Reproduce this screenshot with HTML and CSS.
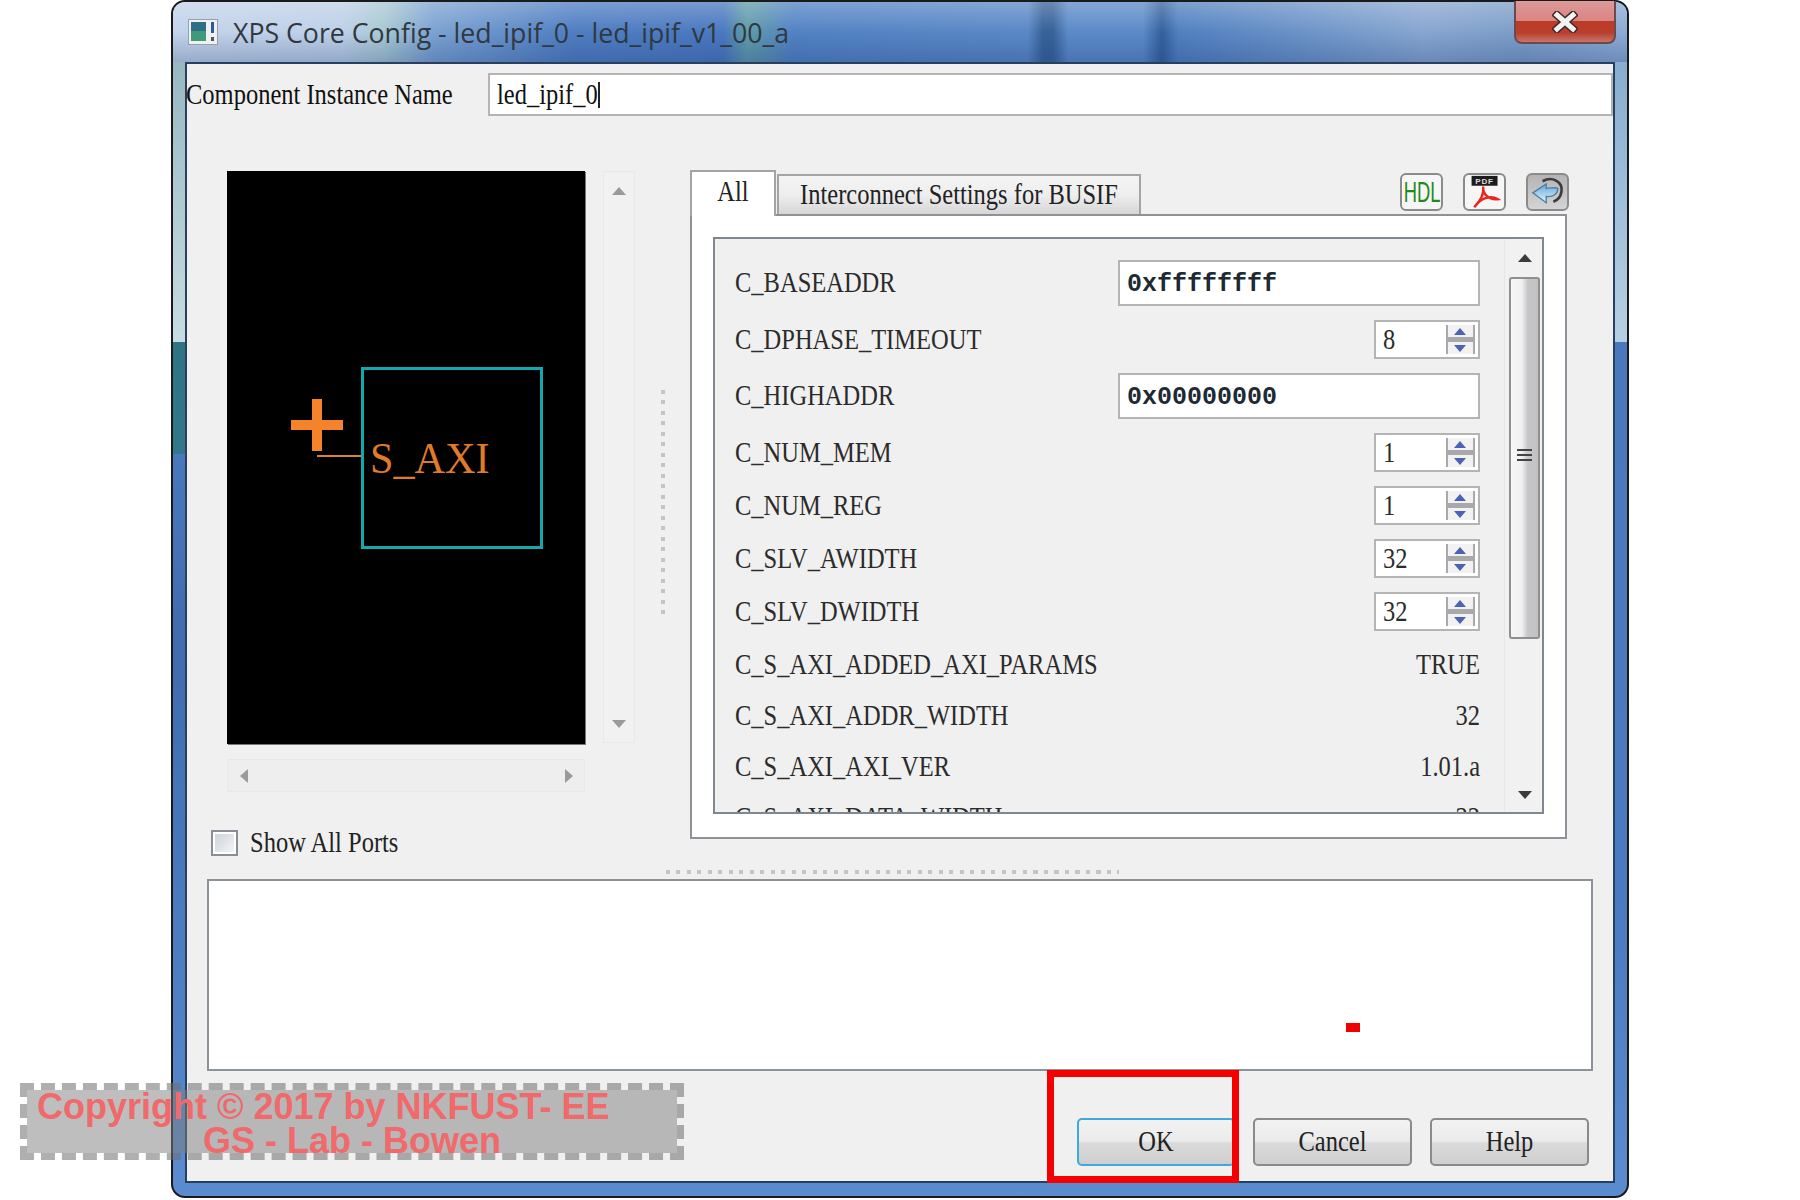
FILE: index.html
```html
<!DOCTYPE html>
<html lang="en">
<head>
    <meta charset="UTF-8">
    <title>XPS Core Config</title>
    <link rel="stylesheet" href="styles.css">
</head>
<body>
    <div class="window">
        <div class="titlebar">
            <svg class="app-icon" viewBox="0 0 30 26" width="30" height="26">
                <rect x="0.5" y="0.5" width="29" height="25" fill="#eef0f2" stroke="#9aa0a8"/>
                <rect x="3" y="3" width="15" height="19" fill="#2c6f86"/>
                <rect x="3" y="12" width="15" height="10" fill="#3f9a7a"/>
                <rect x="23" y="3" width="3" height="11" fill="#2c5a9a"/>
                <rect x="23" y="18" width="3" height="4" fill="#555"/>
            </svg>
            <span class="title-text">XPS Core Config - led_ipif_0 - led_ipif_v1_00_a</span>
            <div class="close-btn">
                <svg viewBox="0 0 26 22" width="26" height="22">
                    <path d="M5 4 L21 18 M21 4 L5 18" stroke="#3b2a2a" stroke-width="8" stroke-linecap="square"/>
                    <path d="M5 4 L21 18 M21 4 L5 18" stroke="#f4f1f1" stroke-width="5" stroke-linecap="square"/>
                </svg>
            </div>
        </div>

        <div class="client">
            <div class="name-row">
                <label class="name-label"><span class="tall">Component Instance Name</span></label>
                <div class="name-input"><span class="tall">led_ipif_0</span><i class="caret"></i></div>
            </div>

            <div class="main">
                <div class="diagram-col">
                    <div class="diagram-row">
                        <div class="canvas">
                            <div class="plus"></div>
                            <div class="wire"></div>
                            <div class="ip-box"><span class="ip-name">S_AXI</span></div>
                        </div>
                        <div class="vscroll">
                            <i class="arrow up grey"></i>
                            <i class="arrow down grey"></i>
                        </div>
                    </div>
                    <div class="hscroll">
                        <i class="arrow left grey"></i>
                        <i class="arrow right grey"></i>
                    </div>
                    <div class="show-ports">
                        <span class="checkbox"></span>
                        <span class="tall">Show All Ports</span>
                    </div>
                </div>

                <div class="vsplit"></div>

                <div class="settings">
                    <div class="tab-head">
                        <div class="tab active"><span class="tall">All</span></div>
                        <div class="tab"><span class="tall">Interconnect Settings for BUSIF</span></div>
                        <div class="tools">
                            <div class="tool hdl"><span class="hdl-text">HDL</span></div>
                            <div class="tool">
                                <svg viewBox="0 0 40 38" width="38" height="34">
                                    <rect x="5" y="1" width="29" height="11" fill="#1c1c1c"/>
                                    <text x="19.5" y="10" class="pdf-text">PDF</text>
                                    <path d="M8 36 C14 30 19 21 18 13 C17 21 24 28 34 27 C26 22 15 26 8 36 Z" fill="none" stroke="#e8281e" stroke-width="2.8"/>
                                </svg>
                            </div>
                            <div class="tool back">
                                <svg viewBox="0 0 40 38" width="38" height="34">
                                    <path d="M14 7 C24 1 37 7 35 19 C34 25 31 28 26 30" fill="none" stroke="#3c3c3c" stroke-width="3"/>
                                    <path d="M3 20 L18 10 L18 15 C24 15 28 13 31 15 C31 21 26 25 18 24 L18 31 Z" fill="url(#backFill)" stroke="#4d7ea8" stroke-width="1.5"/>
                                    <defs>
                                        <linearGradient id="backFill" x1="0" y1="0" x2="0" y2="1">
                                            <stop offset="0" stop-color="#5fa8dc"/>
                                            <stop offset="1" stop-color="#e6f4fb"/>
                                        </linearGradient>
                                    </defs>
                                </svg>
                            </div>
                        </div>
                    </div>
                    <div class="pane">
                        <div class="params">
                            <div class="rows">
                                <div class="row">
                                    <span class="tall">C_BASEADDR</span>
                                    <div class="field">0xffffffff</div>
                                </div>
                                <div class="row">
                                    <span class="tall">C_DPHASE_TIMEOUT</span>
                                    <div class="spin"><span class="tall">8</span><div class="spin-btns"><i class="spin-up"></i><i class="spin-down"></i></div></div>
                                </div>
                                <div class="row">
                                    <span class="tall">C_HIGHADDR</span>
                                    <div class="field">0x00000000</div>
                                </div>
                                <div class="row">
                                    <span class="tall">C_NUM_MEM</span>
                                    <div class="spin"><span class="tall">1</span><div class="spin-btns"><i class="spin-up"></i><i class="spin-down"></i></div></div>
                                </div>
                                <div class="row">
                                    <span class="tall">C_NUM_REG</span>
                                    <div class="spin"><span class="tall">1</span><div class="spin-btns"><i class="spin-up"></i><i class="spin-down"></i></div></div>
                                </div>
                                <div class="row">
                                    <span class="tall">C_SLV_AWIDTH</span>
                                    <div class="spin"><span class="tall">32</span><div class="spin-btns"><i class="spin-up"></i><i class="spin-down"></i></div></div>
                                </div>
                                <div class="row">
                                    <span class="tall">C_SLV_DWIDTH</span>
                                    <div class="spin"><span class="tall">32</span><div class="spin-btns"><i class="spin-up"></i><i class="spin-down"></i></div></div>
                                </div>
                                <div class="row plain">
                                    <span class="tall">C_S_AXI_ADDED_AXI_PARAMS</span>
                                    <span class="tall">TRUE</span>
                                </div>
                                <div class="row plain">
                                    <span class="tall">C_S_AXI_ADDR_WIDTH</span>
                                    <span class="tall">32</span>
                                </div>
                                <div class="row plain">
                                    <span class="tall">C_S_AXI_AXI_VER</span>
                                    <span class="tall">1.01.a</span>
                                </div>
                                <div class="row plain">
                                    <span class="tall">C_S_AXI_DATA_WIDTH</span>
                                    <span class="tall">32</span>
                                </div>
                            </div>
                            <div class="rows-scroll">
                                <i class="arrow up dark"></i>
                                <div class="thumb"><div class="grip"></div></div>
                                <i class="arrow down dark"></i>
                            </div>
                        </div>
                    </div>
                </div>
            </div>

            <div class="hsplit"></div>
            <div class="message"></div>

            <div class="buttons">
                <button class="btn default"><span class="tall">OK</span></button>
                <button class="btn"><span class="tall">Cancel</span></button>
                <button class="btn"><span class="tall">Help</span></button>
            </div>
        </div>

        <div class="red-box"></div>
        <div class="red-dot"></div>
    </div>

    <div class="watermark">
        <div>Copyright © 2017 by NKFUST- EE</div>
        <div class="wm-second">GS - Lab - Bowen</div>
    </div>
</body>
</html>
```

FILE: styles.css
```css
body {
    margin: 0;
    background: #fff;
    font-family: "Liberation Serif", serif;
    font-size: 24.5px;
    color: #2b2b2b;
}

.tall {
    display: inline-block;
    transform: scaleY(1.18);
}

.window {
    position: relative;
    box-sizing: border-box;
    width: 1458px;
    height: 1198px;
    margin-left: 171px;
    padding: 0 12px;
    border: 2px solid #1a1a1a;
    border-radius: 14px;
    background:
        linear-gradient(to bottom, #8db0ba 0, #c8dce2 340px, #2f7485 340px, #33788a 452px, #4a78bd 452px, #3f6dae 640px, #4a7abf 900px, #5b8ccf 100%) left / 50% 100% no-repeat,
        linear-gradient(to bottom, #7ea6cc 0, #b7cfe2 340px, #4a78bd 340px, #4a7abf 900px, #5b8ccf 100%) right / 50% 100% no-repeat;
}

.titlebar {
    display: flex;
    align-items: center;
    height: 60px;
    margin: 0 -12px;
    padding: 0 11px 0 15px;
    border-radius: 12px 12px 0 0;
    background:
        linear-gradient(to bottom, rgba(255, 255, 255, 0.25), rgba(255, 255, 255, 0) 50%, rgba(20, 50, 110, 0.25)),
        linear-gradient(to right, #c3d3ea 0, #bdd0e8 170px, #a8c8d2 211px, #7ba2d2 260px, #4f7ec2 400px, #4a78c0 550px, #5f9ca8 574px, #5282c4 620px, #5a88c6 855px, #37629a 870px, #37629a 880px, #5b8ac8 895px, #5b8ac8 970px, #33609c 989px, #5080c0 1005px, #87a6d0 1250px, #7d9dc8 1350px, #8dabd4 100%);
}

.app-icon {
    flex: none;
}

.title-text {
    flex: 1;
    margin-left: 15px;
    font-family: "Open Sans", sans-serif;
    font-size: 26.7px;
    color: #303840;
}

.close-btn {
    display: flex;
    align-items: center;
    justify-content: center;
    width: 98px;
    height: 41px;
    margin-top: -19px;
    border: 2px solid #6d4a4a;
    border-top: none;
    border-radius: 0 0 8px 8px;
    background: linear-gradient(to bottom, #dc9a98 0, #d98583 48%, #bf3a26 50%, #b8402e 78%, #c9746c 100%);
}

.client {
    box-sizing: border-box;
    height: 1121px;
    border: 2px solid #27405f;
    background: #f0f0f0;
}

.name-row {
    display: flex;
    align-items: center;
    margin-top: 9px;
}

.name-label {
    width: 302px;
    margin-left: -1px;
    color: #111;
}

.name-input {
    box-sizing: border-box;
    display: flex;
    align-items: center;
    width: 1125px;
    height: 43px;
    padding-left: 7px;
    border: 2px solid #b4b4b4;
    background: #fff;
    color: #111;
}

.caret {
    width: 2px;
    height: 26px;
    background: #222;
}

/* preview on the left, tabbed parameters on the right */
.main {
    display: flex;
    align-items: flex-start;
    margin-top: 55px;
    margin-left: 40px;
}

.diagram-row {
    display: flex;
    align-items: flex-start;
}

.canvas {
    position: relative;
    width: 358px;
    height: 573px;
    background: #000;
    box-shadow: 1px 1px 0 #777;
}

.plus {
    position: absolute;
    left: 64px;
    top: 228px;
    width: 52px;
    height: 52px;
    background:
        linear-gradient(#f5832b, #f5832b) center / 52px 10px no-repeat,
        linear-gradient(#f5832b, #f5832b) center / 10px 52px no-repeat;
}

.wire {
    position: absolute;
    left: 90px;
    top: 284px;
    width: 45px;
    height: 2px;
    background: #d9832f;
}

.ip-box {
    position: absolute;
    left: 134px;
    top: 196px;
    box-sizing: border-box;
    width: 182px;
    height: 182px;
    border: 3px solid #14a8ac;
}

.ip-name {
    position: absolute;
    left: 6px;
    top: 63px;
    font-size: 44px;
    color: #e07c28;
    transform: scaleX(0.96);
    transform-origin: left;
}

.vscroll {
    display: flex;
    flex-direction: column;
    align-items: center;
    justify-content: space-between;
    box-sizing: border-box;
    width: 32px;
    height: 572px;
    margin-left: 18px;
    padding: 15px 0 14px;
    border: 1px solid #e9e9e9;
    background: #f1f1f1;
}

.hscroll {
    display: flex;
    align-items: center;
    justify-content: space-between;
    box-sizing: border-box;
    width: 358px;
    height: 33px;
    margin-top: 15px;
    padding: 0 11px 0 12px;
    border: 1px solid #e9e9e9;
    background: #eeeeee;
}

.arrow {
    display: block;
    width: 0;
    height: 0;
}

.arrow.up {
    border: 7px solid transparent;
    border-top: none;
    border-bottom: 8px solid var(--tri);
}

.arrow.down {
    border: 7px solid transparent;
    border-bottom: none;
    border-top: 8px solid var(--tri);
}

.arrow.left {
    border: 7px solid transparent;
    border-left: none;
    border-right: 8px solid var(--tri);
}

.arrow.right {
    border: 7px solid transparent;
    border-right: none;
    border-left: 8px solid var(--tri);
}

.arrow.grey {
    --tri: #9a9a9a;
}

.arrow.dark {
    --tri: #3b3b3b;
}

.show-ports {
    display: flex;
    align-items: center;
    gap: 12px;
    margin-top: 37px;
    margin-left: -16px;
    color: #222;
}

.checkbox {
    box-sizing: border-box;
    width: 27px;
    height: 26px;
    border: 2px solid #8a8f96;
    background: linear-gradient(135deg, #c9d0da, #f6f7f9);
    box-shadow: inset 0 0 0 2px #fff;
}

.vsplit {
    width: 4px;
    height: 227px;
    margin-top: 219px;
    margin-left: 26px;
    background: repeating-linear-gradient(to bottom, #c4c4c4 0 4px, transparent 4px 10.5px);
}

.settings {
    width: 877px;
    margin-left: 25px;
}

.tab-head {
    display: flex;
    align-items: flex-end;
    height: 43px;
}

.tab {
    box-sizing: border-box;
    display: flex;
    align-items: center;
    justify-content: center;
    width: 364px;
    height: 40px;
    margin-left: 1px;
    border: 2px solid #a4a4a4;
    border-bottom: none;
    background: linear-gradient(to bottom, #f4f4f4 0, #eeeeee 50%, #d6d6d6 100%);
    color: #222;
}

.tab.active {
    width: 86px;
    height: 46px;
    margin-left: 0;
    margin-bottom: -2px;
    padding-bottom: 5px;
    background: #fff;
    position: relative;
    z-index: 1;
}

.tools {
    display: flex;
    gap: 20px;
    margin-left: auto;
    margin-right: -2px;
    margin-bottom: 3px;
}

.tool {
    box-sizing: border-box;
    display: flex;
    align-items: center;
    justify-content: center;
    width: 43px;
    height: 38px;
    border: 2px solid #8b8b8b;
    border-radius: 6px;
    background: #f6f6f6;
    overflow: hidden;
}

.tool.hdl {
    font-family: "Liberation Sans", sans-serif;
    font-size: 27px;
    color: #1e8a1e;
}

.hdl-text {
    display: inline-block;
    transform: scale(0.68, 1.08);
}

.tool.back {
    background: linear-gradient(to bottom, #b4b4b4, #d4d4d4);
}

.pdf-text {
    font-family: "Liberation Sans", sans-serif;
    font-size: 9px;
    font-weight: bold;
    fill: #ddd;
    text-anchor: middle;
    letter-spacing: 1px;
}

.pane {
    box-sizing: border-box;
    height: 625px;
    padding: 21px;
    border: 2px solid #8e9297;
    background: #fff;
}

.params {
    box-sizing: border-box;
    display: flex;
    width: 831px;
    height: 577px;
    border: 2px solid #7f8890;
    background: #f0f0f0;
    overflow: hidden;
}

.rows {
    box-sizing: border-box;
    width: 790px;
    height: 100%;
    padding: 21px 24px 0 20px;
    border-right: 1px solid #e3e8ee;
    overflow: hidden;
}

.row {
    display: flex;
    align-items: center;
    justify-content: space-between;
    margin-bottom: 14px;
    color: #2b2b2b;
}

.row.plain {
    box-sizing: border-box;
    height: 37px;
    padding-top: 2px;
}

.field {
    box-sizing: border-box;
    width: 362px;
    height: 46px;
    padding: 3px 0 0 7px;
    border: 2px solid #b4b4b4;
    background: #fff;
    font-family: "Liberation Mono", monospace;
    font-size: 25px;
    font-weight: bold;
    line-height: 40px;
    color: #1e2a33;
}

.spin {
    box-sizing: border-box;
    display: flex;
    align-items: center;
    justify-content: space-between;
    width: 106px;
    height: 39px;
    padding: 0 3px 0 7px;
    border: 2px solid #b4b4b4;
    background: #fff;
}

.spin-btns {
    box-sizing: border-box;
    display: flex;
    flex-direction: column;
    justify-content: space-between;
    width: 29px;
    height: 29px;
    border: 2px solid #a9a9a9;
    border-top: none;
    border-bottom: none;
    background: #a9a9a9;
}

.spin-up,
.spin-down {
    position: relative;
    display: block;
    height: 12px;
    background: #f2f2f2;
}

.spin-up::after,
.spin-down::after {
    content: "";
    position: absolute;
    left: 6px;
    top: 3px;
    border: 6px solid transparent;
}

.spin-up::after {
    border-top: none;
    border-bottom: 7px solid #4a62b8;
}

.spin-down::after {
    border-bottom: none;
    border-top: 7px solid #4a62b8;
}

.rows-scroll {
    display: flex;
    flex-direction: column;
    align-items: center;
    box-sizing: border-box;
    flex: 1;
    padding: 15px 2px 13px 4px;
    background: #f1f1f1;
}

.rows-scroll .arrow.down {
    margin-top: auto;
}

.thumb {
    display: flex;
    align-items: center;
    justify-content: center;
    box-sizing: border-box;
    flex: none;
    width: 31px;
    height: 362px;
    margin-top: 15px;
    border: 2px solid #8f8f8f;
    border-radius: 3px;
    background: linear-gradient(to right, #f7f7f7 0, #f0f0f0 40%, #c6c6c8 62%, #c2c2c4 100%);
}

.grip {
    width: 15px;
    height: 13px;
    margin-bottom: 6px;
    background: repeating-linear-gradient(to bottom, #444 0 2px, transparent 2px 5px);
}

.hsplit {
    width: 453px;
    height: 4px;
    margin-top: 13px;
    margin-left: 479px;
    background: repeating-linear-gradient(to right, #c4c4c4 0 4px, transparent 4px 10.5px);
}

.message {
    box-sizing: border-box;
    width: 1386px;
    height: 192px;
    margin-top: 5px;
    margin-left: 20px;
    border: 2px solid #8c9299;
    background: #fff;
}

.buttons {
    display: flex;
    justify-content: flex-end;
    gap: 18px;
    margin-top: 47px;
    padding-right: 24px;
}

.btn {
    box-sizing: border-box;
    width: 159px;
    height: 48px;
    padding: 0;
    border: 2px solid #8a8a8a;
    border-radius: 5px;
    background: linear-gradient(to bottom, #f2f2f2 0, #ebebeb 48%, #dadada 52%, #cfcfcf 100%);
    font-family: "Liberation Serif", serif;
    font-size: 24.5px;
    color: #222;
}

.btn.default {
    width: 158px;
    border-color: #3fa9d8;
}

.red-box {
    position: absolute;
    left: 874px;
    top: 1068px;
    box-sizing: border-box;
    width: 192px;
    height: 113px;
    border: 7px solid #f40000;
}

.red-dot {
    position: absolute;
    left: 1173px;
    top: 1021px;
    width: 14px;
    height: 9px;
    background: #f00000;
}

.watermark {
    position: absolute;
    left: 20px;
    top: 1083px;
    box-sizing: border-box;
    width: 664px;
    height: 77px;
    padding-left: 10px;
    border: 7px dashed rgba(110, 110, 110, 0.55);
    background: rgba(125, 125, 125, 0.5);
    background-clip: padding-box;
    font-family: "Liberation Sans", sans-serif;
    font-size: 36px;
    font-weight: bold;
    line-height: 34px;
    color: #f0696b;
}

.wm-second {
    margin-left: 166px;
}
```
